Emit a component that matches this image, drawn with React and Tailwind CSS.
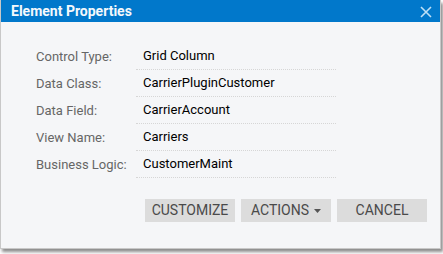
const fields = [
  { label: 'Control Type:', value: 'Grid Column' },
  { label: 'Data Class:', value: 'CarrierPluginCustomer' },
  { label: 'Data Field:', value: 'CarrierAccount' },
  { label: 'View Name:', value: 'Carriers' },
  { label: 'Business Logic:', value: 'CustomerMaint' },
];

function Button({ children }) {
  return (
    <button className="flex h-[23px] w-[90px] items-center justify-center gap-[5px] bg-[#dcdcdc] text-[14px] uppercase text-[#4a4a4a]">
      {children}
    </button>
  );
}

export default function App() {
  return (
    <div className="h-[254px] w-[443px] bg-white font-['Roboto',sans-serif]">
      <div className="flex h-[249px] w-[441px] flex-col border-x border-b border-[#c8c8c8] bg-[#f5f6f8] shadow-[2px_3px_3px_rgba(0,0,0,0.45)]">
        {/* title bar */}
        <div className="flex h-[22px] shrink-0 items-center justify-between bg-[#0178cb] pl-[10px] pr-[8px]">
          <span className="text-[14px] font-bold text-[#f4f8fc]">Element Properties</span>
          <svg width="12" height="12" viewBox="0 0 12 12" className="mt-[2px]">
            <path d="M1 1L11 11M11 1L1 11" stroke="#bfe0f6" strokeWidth="1.6" />
          </svg>
        </div>

        {/* fields */}
        <div className="flex flex-col pl-[35px] pt-[21px]">
          {fields.map((f) => (
            <div key={f.label} className="flex h-[27px] items-center">
              <div className="w-[100px] text-[13px] text-[#666]">{f.label}</div>
              <div className="flex h-full w-[200px] items-center border-b border-dotted border-[#d6d6d6] pl-[7px] text-[13px] text-black">
                {f.value}
              </div>
            </div>
          ))}
        </div>

        {/* buttons */}
        <div className="mt-[21px] flex justify-end gap-[6px] pr-[13px]">
          <Button>Customize</Button>
          <Button>
            Actions
            <svg width="7" height="4" viewBox="0 0 7 4">
              <path d="M0 0H7L3.5 4Z" fill="#555" />
            </svg>
          </Button>
          <Button>Cancel</Button>
        </div>
      </div>
    </div>
  );
}
